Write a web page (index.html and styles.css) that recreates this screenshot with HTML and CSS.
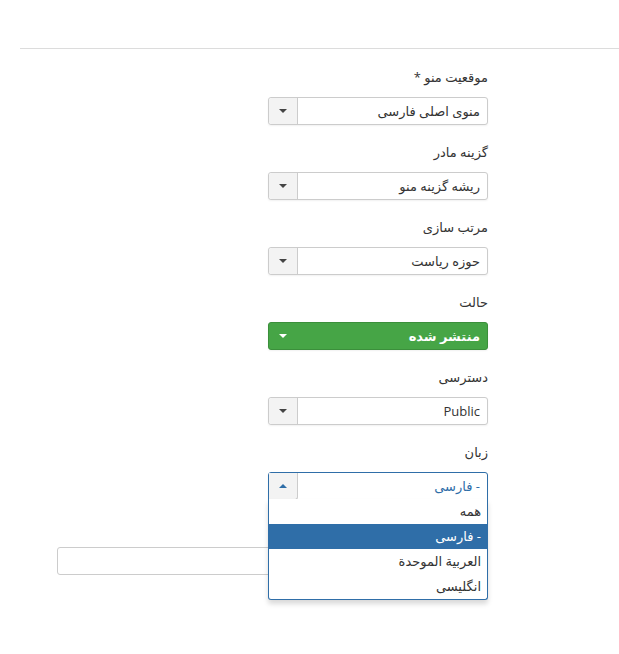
FILE: index.html
```html
<!DOCTYPE html>
<html lang="fa" dir="rtl">
<head>
<meta charset="utf-8">
<link rel="stylesheet" href="styles.css">
</head>
<body>
<div class="page">
  <div class="rule"></div>
  <div class="form">
    <div class="group">
      <div class="label">موقعیت منو *</div>
      <div class="select">
        <span class="value">منوی اصلی فارسی</span>
        <span class="btn"><span class="tri down"></span></span>
      </div>
    </div>
    <div class="group">
      <div class="label">گزینه مادر</div>
      <div class="select">
        <span class="value">ریشه گزینه منو</span>
        <span class="btn"><span class="tri down"></span></span>
      </div>
    </div>
    <div class="group">
      <div class="label">مرتب سازی</div>
      <div class="select">
        <span class="value">حوزه ریاست</span>
        <span class="btn"><span class="tri down"></span></span>
      </div>
    </div>
    <div class="group">
      <div class="label">حالت</div>
      <div class="select green">
        <span class="value">منتشر شده</span>
        <span class="btn"><span class="tri down white"></span></span>
      </div>
    </div>
    <div class="group">
      <div class="label">دسترسی</div>
      <div class="select">
        <span class="value">Public</span>
        <span class="btn"><span class="tri down"></span></span>
      </div>
    </div>
    <div class="group last">
      <div class="label">زبان</div>
      <div class="select open">
        <span class="value blue">- فارسی</span>
        <span class="btn"><span class="tri up"></span></span>
        <ul class="drop">
          <li>همه</li>
          <li class="hl">- فارسی</li>
          <li>العربية الموحدة</li>
          <li>انگلیسی</li>
        </ul>
      </div>
    </div>
  </div>
  <div class="bottom">
    <div class="input"></div>
  </div>
</div>
</body>
</html>
```
FILE: styles.css
```css
html, body {
  margin: 0;
  padding: 0;
  background: #fff;
}
body {
  font-family: "Open Sans", "DejaVu Sans", sans-serif;
  font-size: 13px;
  color: #333;
}
.page {
  width: 619px;
  height: 654px;
  position: relative;
  direction: ltr;
}
.rule {
  height: 48px;
  border-bottom: 1px solid #dcdcdc;
  margin-left: 20px;
}
.form {
  direction: rtl;
  padding-right: 131px;
  padding-top: 19px;
  position: relative;
  z-index: 2;
}
.group {
  width: 220px;
  margin-bottom: 18px;
}
.group.last {
  margin-bottom: 0;
}
.label {
  height: 18px;
  line-height: 18px;
  margin-bottom: 11px;
  text-align: right;
}
.select {
  position: relative;
  height: 26px;
  border: 1px solid #ccc;
  border-radius: 3px;
  display: flex;
  direction: rtl;
  background: #fff;
  box-shadow: 0 1px 2px rgba(0,0,0,0.06);
}
.value {
  flex: 1;
  line-height: 26px;
  padding-right: 7px;
  text-align: right;
  white-space: nowrap;
}
.btn {
  width: 28px;
  border-right: 1px solid #ccc;
  background: #f3f3f3;
  border-radius: 3px 0 0 3px;
  display: flex;
  align-items: center;
  justify-content: center;
}
.tri {
  width: 0;
  height: 0;
  border-left: 4px solid transparent;
  border-right: 4px solid transparent;
}
.tri.down {
  border-top: 4px solid #444;
}
.tri.down.white {
  border-top-color: #fff;
}
.tri.up {
  border-bottom: 4px solid #2f6ea8;
}
.select.green {
  background: #46a546;
  border-color: #3b8f3b;
  color: #fff;
}
.select.green .value {
  font-weight: bold;
  letter-spacing: 0.3px;
}
.select.green .btn {
  background: transparent;
  border-right: none;
}
.select.open {
  border-color: #2f6ea8;
  border-radius: 3px 3px 0 0;
}
.select.open .btn {
  border: 1px solid #ccc;
  border-top: none;
  border-left: none;
  border-radius: 0 0 3px 0;
  margin-bottom: -1px;
}
.value.blue {
  color: #2f6ea8;
}
.drop {
  list-style: none;
  margin: 0;
  padding: 0;
  position: absolute;
  top: 26px;
  left: -1px;
  right: -1px;
  background: #fff;
  border: 1px solid #2f6ea8;
  border-top: none;
  border-radius: 0 0 3px 3px;
  box-shadow: 0 4px 5px rgba(0,0,0,0.15);
}
.drop li {
  height: 25px;
  line-height: 25px;
  padding-right: 6px;
  text-align: right;
  color: #333;
}
.drop li.hl {
  background: #2f6ea8;
  color: #fff;
}
.bottom {
  position: relative;
  z-index: 1;
  direction: ltr;
  padding-left: 57px;
  padding-top: 47px;
}
.input {
  width: 240px;
  height: 26px;
  border: 1px solid #ccc;
  border-radius: 3px;
}
```
